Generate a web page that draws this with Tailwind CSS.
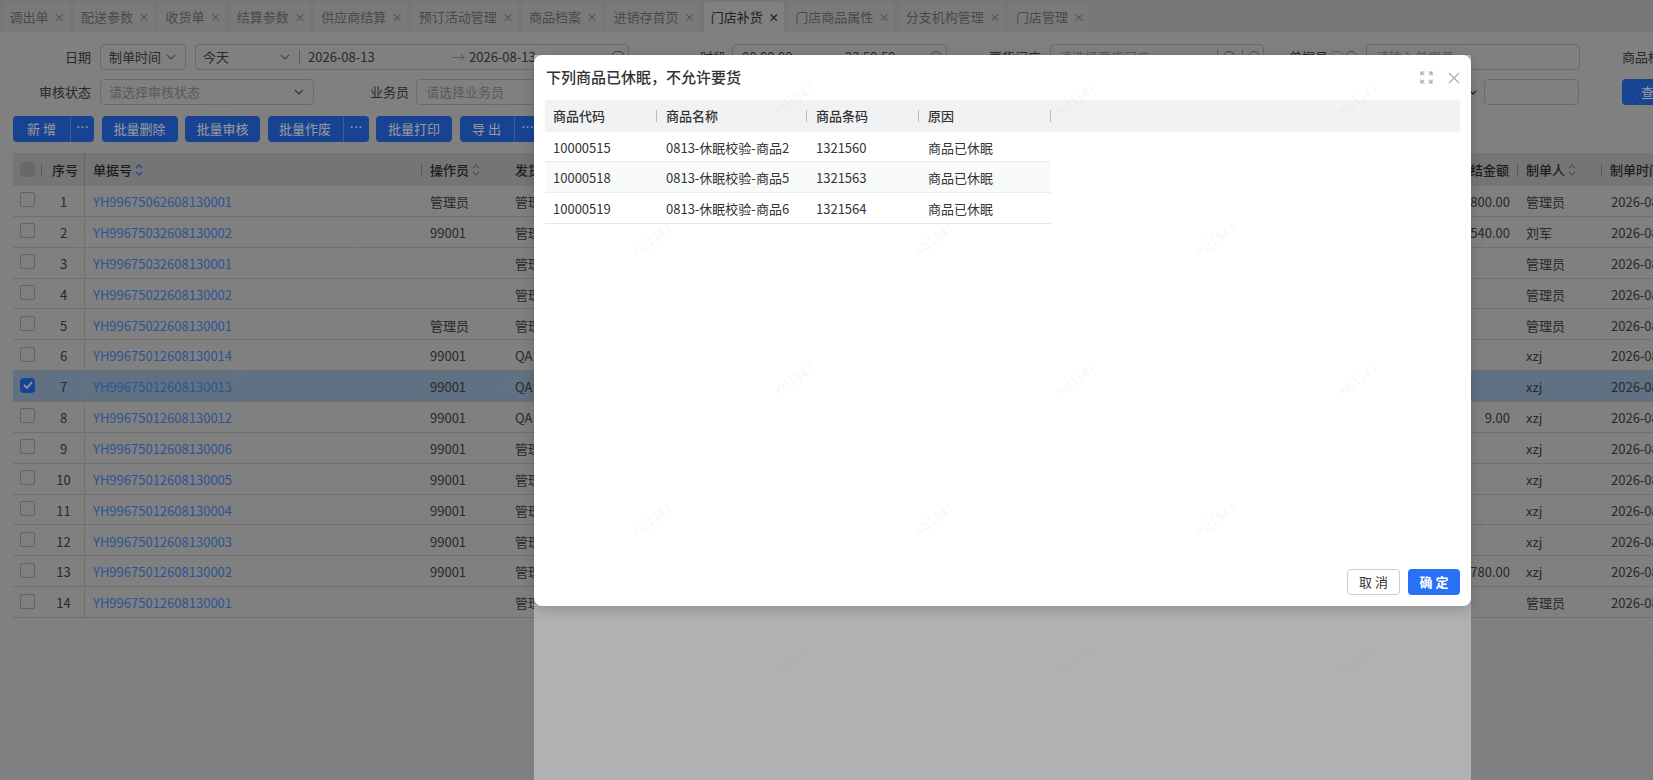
<!DOCTYPE html>
<html lang="zh-CN">
<head>
  <meta charset="UTF-8" />
  <title>门店补货</title>
  <script src="https://cdn.jsdelivr.net/npm/@tailwindcss/browser@4"></script>
</head>
<body class="relative h-screen overflow-hidden bg-[#d5d5d5] text-[13px] text-[#464646] font-['Noto_Sans_CJK_SC','Noto_Sans',sans-serif]">

<!-- Tabs -->
<div class="flex h-[32px] items-stretch gap-[4.4px] bg-[#c5c5c5] pl-[2.6px] pt-[2px] text-[#7b7b7b]">
  <div class="flex items-center rounded-t bg-[#cbcbcb] pl-[7px] pr-[7.5px]">调出单<span class="ml-[5.5px] w-[8px] text-[11px] leading-none">×</span></div>
  <div class="flex items-center rounded-t bg-[#cbcbcb] pl-[7px] pr-[7.5px]">配送参数<span class="ml-[5.5px] w-[8px] text-[11px] leading-none">×</span></div>
  <div class="flex items-center rounded-t bg-[#cbcbcb] pl-[7px] pr-[7.5px]">收货单<span class="ml-[5.5px] w-[8px] text-[11px] leading-none">×</span></div>
  <div class="flex items-center rounded-t bg-[#cbcbcb] pl-[7px] pr-[7.5px]">结算参数<span class="ml-[5.5px] w-[8px] text-[11px] leading-none">×</span></div>
  <div class="flex items-center rounded-t bg-[#cbcbcb] pl-[7px] pr-[7.5px]">供应商结算<span class="ml-[5.5px] w-[8px] text-[11px] leading-none">×</span></div>
  <div class="flex items-center rounded-t bg-[#cbcbcb] pl-[7px] pr-[7.5px]">预订活动管理<span class="ml-[5.5px] w-[8px] text-[11px] leading-none">×</span></div>
  <div class="flex items-center rounded-t bg-[#cbcbcb] pl-[7px] pr-[7.5px]">商品档案<span class="ml-[5.5px] w-[8px] text-[11px] leading-none">×</span></div>
  <div class="flex items-center rounded-t bg-[#cbcbcb] pl-[7px] pr-[7.5px]">进销存首页<span class="ml-[5.5px] w-[8px] text-[11px] leading-none">×</span></div>
  <div class="flex items-center rounded-t bg-[#d5d5d5] pl-[7px] pr-[7.5px] text-[#333]">门店补货<span class="ml-[5.5px] w-[8px] text-[11px] font-bold leading-none">×</span></div>
  <div class="flex items-center rounded-t bg-[#cbcbcb] pl-[7px] pr-[7.5px]">门店商品属性<span class="ml-[5.5px] w-[8px] text-[11px] leading-none">×</span></div>
  <div class="flex items-center rounded-t bg-[#cbcbcb] pl-[7px] pr-[7.5px]">分支机构管理<span class="ml-[5.5px] w-[8px] text-[11px] leading-none">×</span></div>
  <div class="flex items-center rounded-t bg-[#cbcbcb] pl-[7px] pr-[7.5px]">门店管理<span class="ml-[5.5px] w-[8px] text-[11px] leading-none">×</span></div>
</div>

<!-- Filter row 1 -->
<div class="mt-[12px] flex h-[26px] items-center whitespace-nowrap *:shrink-0">
  <label class="w-[91px] text-right">日期</label>
  <div class="ml-[9px] flex h-full w-[86px] items-center justify-between rounded border border-[#b1b1b1] pl-[8px] pr-[8px]">制单时间
    <svg class="h-3 w-3" viewBox="0 0 12 12" fill="none" stroke="#777" stroke-width="1.2"><path d="M2 4l4 4 4-4" /></svg>
  </div>
  <div class="ml-[9px] flex h-full w-[434px] items-center rounded border border-[#b1b1b1] pl-[7px]">
    <span class="w-[76px]">今天</span>
    <svg class="h-3 w-3" viewBox="0 0 12 12" fill="none" stroke="#777" stroke-width="1.2"><path d="M2 4l4 4 4-4" /></svg>
    <span class="ml-[8px] h-[14px] w-px bg-[#999]"></span>
    <span class="ml-[8px] w-[144px]">2026-08-13</span>
    <span class="w-[17px] text-[#999]">→</span>
    <span>2026-08-13</span>
    <span class="ml-[76px] h-3 w-3 rounded-sm border border-[#777]"></span>
  </div>
  <label class="ml-[71px] w-[23px] text-right">时段</label>
  <div class="ml-[9px] flex h-full w-[215px] items-center rounded border border-[#b1b1b1] pl-[9px]">
    <span class="w-[103px]">00:00:00</span><span>23:59:59</span>
    <span class="ml-[34px] h-3 w-3 rounded-full border border-[#777]"></span>
  </div>
  <label class="ml-[42px] w-[52px] text-right">要货门店</label>
  <div class="ml-[9px] flex h-full w-[214px] items-center rounded border border-[#b1b1b1] pl-[8px] text-[#969696]">
    <span class="w-[158px]">请选择要货门店</span>
    <span class="h-[14px] w-px bg-[#999]"></span>
    <span class="ml-[5px] h-3 w-3 rounded-full border border-[#666]"></span>
    <span class="ml-[7px] h-[14px] w-px bg-[#999]"></span>
    <span class="ml-[5px] h-3 w-3 rounded-full border border-[#777]"></span>
  </div>
  <label class="ml-[25px] w-[38px]">单据号</label>
  <span class="ml-[2.5px] h-[13px] w-[13.5px] rounded-sm border border-[#aaa]"></span>
  <span class="ml-[2px] h-3 w-3 rounded-full border border-[#888]"></span>
  <div class="ml-[9px] flex h-full w-[214px] items-center rounded border border-[#b1b1b1] pl-[9px] text-[#969696]">请输入单据号</div>
  <label class="ml-[42px]">商品档案</label>
</div>

<!-- Filter row 2 -->
<div class="mt-[9px] flex h-[26px] items-center whitespace-nowrap *:shrink-0">
  <label class="w-[91px] text-right">审核状态</label>
  <div class="ml-[9px] flex h-full w-[214px] items-center justify-between rounded border border-[#b1b1b1] pl-[8px] pr-[8px] text-[#969696]">请选择审核状态
    <svg class="h-3 w-3" viewBox="0 0 12 12" fill="none" stroke="#555" stroke-width="1.2"><path d="M2 4l4 4 4-4" /></svg>
  </div>
  <label class="ml-[56px] w-[37px] text-right">业务员</label>
  <div class="ml-[9px] flex h-full w-[213px] items-center rounded border border-[#b1b1b1] pl-[9px] text-[#969696]">请选择业务员</div>
  <svg class="ml-[838px] h-3 w-3" viewBox="0 0 12 12" fill="none" stroke="#333" stroke-width="1.2"><path d="M3 5l3 3 3-3" /></svg>
  <div class="ml-[5px] h-full w-[95px] rounded border border-[#b1b1b1]"></div>
  <button class="ml-[43px] h-full w-[60px] rounded bg-[#2870f6] pl-[19px] text-left text-white">查 询</button>
</div>

<!-- Buttons -->
<div class="ml-[13px] mt-[11px] flex h-[26px] gap-[7.5px] text-white">
  <div class="flex w-[81px] rounded bg-[#2870f6]"><span class="flex w-[57px] items-center justify-center">新 增</span><span class="flex flex-1 items-center justify-center border-l border-white/30 pb-1">⋯</span></div>
  <button class="w-[76px] rounded bg-[#2870f6]">批量删除</button>
  <button class="w-[75px] rounded bg-[#2870f6]">批量审核</button>
  <div class="flex w-[101px] rounded bg-[#2870f6]"><span class="flex w-[75px] items-center justify-center">批量作废</span><span class="flex flex-1 items-center justify-center border-l border-white/30 pb-1">⋯</span></div>
  <button class="w-[76px] rounded bg-[#2870f6]">批量打印</button>
  <div class="flex w-[81px] rounded bg-[#2870f6]"><span class="flex w-[54px] items-center justify-center">导 出</span><span class="flex flex-1 items-center justify-center border-l border-white/30 pb-1">⋯</span></div>
</div>

<!-- Table -->
<div class="ml-[13px] mt-[11px] w-[1800px]">
  <div class="flex h-[33px] items-center bg-[#c3c3c3] font-medium text-[#333]">
    <div class="flex h-full w-[29px] items-center pl-[7px]"><span class="h-[15px] w-[15px] rounded-sm border border-[#aaa] bg-[#b0b0b0]"></span><span class="ml-auto h-3 w-px bg-[#909090]"></span></div>
    <div class="flex h-full w-[43px] items-center justify-center border-r border-[#a8a8a8] pl-[4px]">序号</div>
    <div class="flex h-full w-[337px] items-center pl-[8px]">单据号
      <svg class="ml-[2px] h-[14px] w-[10px]" viewBox="0 0 10 14" fill="none" stroke="#2870f6" stroke-width="1.2"><path d="M2 5l3-3 3 3M2 9l3 3 3-3" /></svg>
      <span class="ml-auto h-3 w-px bg-[#909090]"></span></div>
    <div class="flex h-full w-[85px] items-center pl-[8px]">操作员
      <svg class="ml-[2px] h-[14px] w-[10px]" viewBox="0 0 10 14" fill="none" stroke="#888" stroke-width="1.2"><path d="M2 5l3-3 3 3M2 9l3 3 3-3" /></svg></div>
    <div class="flex h-full w-[895px] items-center pl-[8px]">发货</div>
    <div class="flex h-full w-[116px] items-center justify-end"><span>结金额</span><span class="ml-[8px] h-3 w-px bg-[#909090]"></span></div>
    <div class="flex h-full w-[84px] items-center pl-[8px]">制单人
      <svg class="ml-[2px] h-[14px] w-[10px]" viewBox="0 0 10 14" fill="none" stroke="#888" stroke-width="1.2"><path d="M2 5l3-3 3 3M2 9l3 3 3-3" /></svg>
      <span class="ml-auto h-3 w-px bg-[#909090]"></span></div>
    <div class="flex h-full flex-1 items-center pl-[8px]">制单时间</div>
  </div>
  <div id="rows"></div>
</div>

<!-- Mask -->
<div class="absolute inset-0 bg-black/40"></div>

<!-- Dialog -->
<div class="absolute bottom-0 left-[534px] top-[55px] w-[937px] bg-[#b1b1b1]">
  <div class="flex h-[551px] flex-col rounded-lg bg-white px-[11px] shadow-[0_4px_14px_rgba(0,0,0,0.18)]">
    <div class="flex h-[45px] items-center justify-between text-[#333]">
      <span class="ml-[1px] text-[15px] font-medium">下列商品已休眠，不允许要货</span>
      <div class="flex items-center gap-[15px]">
        <svg class="h-[13px] w-[13px]" viewBox="0 0 13 13" fill="none" stroke="#aaa" stroke-width="1.2"><path d="M1 4.5V1h3.5M8.5 1H12v3.5M12 8.5V12H8.5M4.5 12H1V8.5M1 1l3 3M12 1L9 4M12 12L9 9M1 12l3-3" /></svg>
        <svg class="h-[12px] w-[12px]" viewBox="0 0 12 12" fill="none" stroke="#aaa" stroke-width="1.1"><path d="M1 1l10 10M11 1L1 11" /></svg>
      </div>
    </div>
    <div class="flex h-[32px] items-center bg-[#f1f2f4] text-[#333] font-medium">
      <div class="flex h-full w-[112px] items-center pl-[8px]">商品代码<span class="ml-auto h-3 w-px bg-[#bbb]"></span></div>
      <div class="flex h-full w-[150px] items-center pl-[9px]">商品名称<span class="ml-auto h-3 w-px bg-[#bbb]"></span></div>
      <div class="flex h-full w-[112px] items-center pl-[9px]">商品条码<span class="ml-auto h-3 w-px bg-[#bbb]"></span></div>
      <div class="flex h-full w-[132px] items-center pl-[9px]">原因<span class="ml-auto h-3 w-px bg-[#bbb]"></span></div>
    </div>
    <div class="w-[506px] text-[#333]">
      <div class="flex h-[30px] items-center border-b border-[#e8e8e8] pt-[2px]">
        <div class="w-[112px] pl-[8px]">10000515</div><div class="w-[150px] pl-[9px]">0813-休眠校验-商品2</div><div class="w-[112px] pl-[9px]">1321560</div><div class="pl-[9px]">商品已休眠</div>
      </div>
      <div class="flex h-[31px] items-center border-b border-[#ececec] bg-[#f9fafa] pt-[2px]">
        <div class="w-[112px] pl-[8px]">10000518</div><div class="w-[150px] pl-[9px]">0813-休眠校验-商品5</div><div class="w-[112px] pl-[9px]">1321563</div><div class="pl-[9px]">商品已休眠</div>
      </div>
      <div class="flex h-[31px] items-center border-b border-[#e8e8e8] pt-[2px]">
        <div class="w-[112px] pl-[8px]">10000519</div><div class="w-[150px] pl-[9px]">0813-休眠校验-商品6</div><div class="w-[112px] pl-[9px]">1321564</div><div class="pl-[9px]">商品已休眠</div>
      </div>
    </div>
    <div class="mb-[11px] mt-auto flex justify-end gap-[8px]">
      <button class="h-[26px] w-[53px] rounded border border-[#ccc] bg-white text-[#333]">取 消</button>
      <button class="h-[26px] w-[52px] rounded bg-[#2870f6] font-bold text-white">确 定</button>
    </div>
  </div>
</div>

<!-- Watermark -->
<div id="wm" class="pointer-events-none absolute inset-0 overflow-hidden"></div>

<script>
  const data = [
    ["YH99675062608130001", "管理员", "管理", "800.00", "管理员"],
    ["YH99675032608130002", "99001", "管理", "540.00", "刘军"],
    ["YH99675032608130001", "", "管理", "", "管理员"],
    ["YH99675022608130002", "", "管理", "", "管理员"],
    ["YH99675022608130001", "管理员", "管理", "", "管理员"],
    ["YH99675012608130014", "99001", "QA", "", "xzj"],
    ["YH99675012608130013", "99001", "QA", "", "xzj"],
    ["YH99675012608130012", "99001", "QA", "9.00", "xzj"],
    ["YH99675012608130006", "99001", "管理", "", "xzj"],
    ["YH99675012608130005", "99001", "管理", "", "xzj"],
    ["YH99675012608130004", "99001", "管理", "", "xzj"],
    ["YH99675012608130003", "99001", "管理", "", "xzj"],
    ["YH99675012608130002", "99001", "管理", "780.00", "xzj"],
    ["YH99675012608130001", "", "管理", "", "管理员"]
  ];

  document.getElementById('rows').innerHTML = data.map((r, i) => {
    const on = i === 6;
    return `<div class="flex h-[30.86px] items-center border-b border-[#b9b9b9] ${on ? 'bg-[#9fbcda]' : ''}">
      <div class="flex h-full w-[29px] items-center pl-[7px] pb-[2px]">
        ${on
          ? '<span class="flex h-[15px] w-[15px] items-center justify-center rounded-sm bg-[#2870f6]"><svg class="h-3 w-3" viewBox="0 0 12 12" fill="none" stroke="white" stroke-width="1.8"><path d="M2 6l3 3 5-6" /></svg></span>'
          : '<span class="h-[15px] w-[15px] rounded-[2px] border border-[#a4a4a4]"></span>'}
      </div>
      <div class="flex h-full w-[43px] items-center justify-center border-r border-[#bcbcbc] pl-[1px] pt-[2px]">${i + 1}</div>
      <div class="w-[337px] pl-[8px] pt-[2px] text-[#4a8ef5]">${r[0]}</div>
      <div class="w-[85px] pl-[8px] pt-[2px]">${r[1]}</div>
      <div class="w-[895px] pl-[8px] pt-[2px]">${r[2]}</div>
      <div class="w-[116px] pr-[8px] pt-[2px] text-right">${r[3]}</div>
      <div class="w-[84px] pl-[8px] pt-[2px]">${r[4]}</div>
      <div class="flex-1 pl-[9px] pt-[2px]">2026-08-13 10:20:30</div>
    </div>`;
  }).join('');

  // small marks sit on a staggered 282 x 140 grid
  let marks = '';
  for (let row = 0; row < 6; row++) {
    for (let col = 0; col < 7; col++) {
      const x = (row % 2 ? 89 : -51) + col * 282;
      const y = 98 + row * 140;
      marks += `<span class="absolute -rotate-[33deg] text-[13px] text-[#999]/10" style="left:${x - 24}px;top:${y - 9}px">xzj1547</span>`;
    }
  }
  [[643, 290], [643, 400], [960, 377], [777, 475], [1300, 190]].forEach(p => {
    marks += `<span class="absolute -rotate-[30deg] text-[36px] text-black/[0.012]" style="left:${p[0] - 80}px;top:${p[1] - 26}px">xzj1547</span>`;
  });
  document.getElementById('wm').innerHTML = marks;
</script>
</body>
</html>
